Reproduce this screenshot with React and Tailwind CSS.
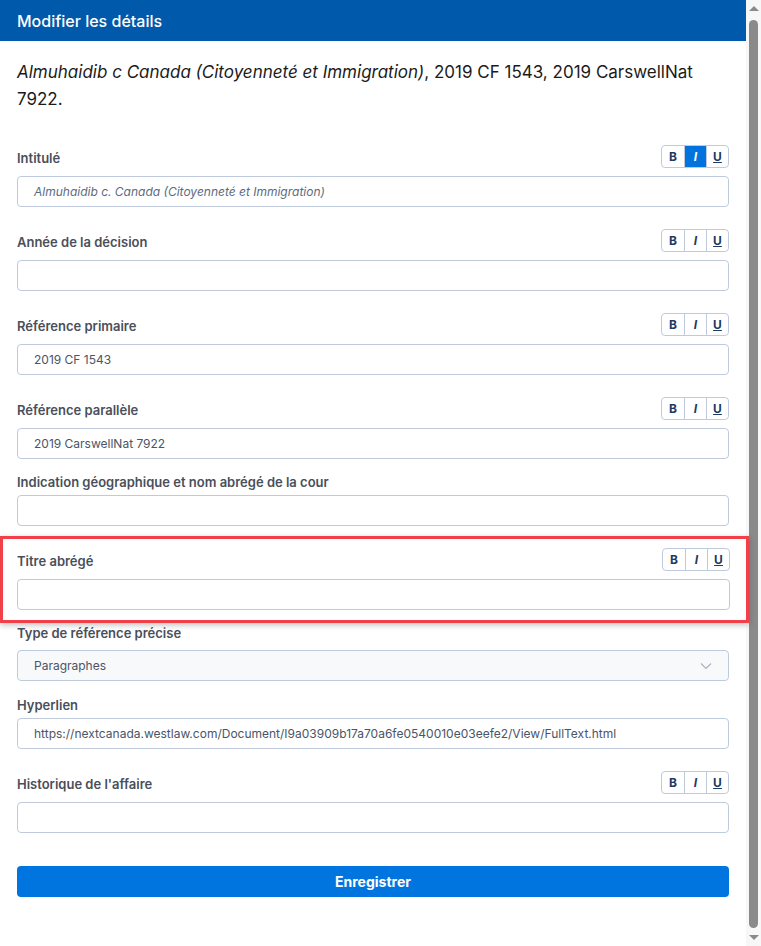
import { useState } from 'react';

const font = { fontFamily: 'Inter, Roboto, "Liberation Sans", sans-serif' };

function Toggles({ active }) {
  const btn = 'w-[22px] h-[21px] flex items-center justify-center text-[12px] text-[#1d3a63]';
  return (
    <div className="flex border border-[#bfcbdc] rounded-[4px] overflow-hidden bg-white">
      <div className={`${btn} font-bold ${active === 'b' ? 'bg-[#0073de] text-white' : ''}`}>B</div>
      <div className={`${btn} italic font-bold border-l border-[#bfcbdc] ${active === 'i' ? 'bg-[#0073de] text-white' : ''}`}>I</div>
      <div className={`${btn} underline font-bold border-l border-[#bfcbdc] ${active === 'u' ? 'bg-[#0073de] text-white' : ''}`}>U</div>
    </div>
  );
}

function Field({ label, value, toggles, active, italic }) {
  return (
    <div>
      {toggles ? (
        <div className="flex items-end justify-between h-[23px]">
          <div className="text-[13px] font-semibold text-[#4a4f5a] leading-[20px]">{label}</div>
          <Toggles active={active} />
        </div>
      ) : (
        <div className="text-[13px] font-semibold text-[#4a4f5a] leading-[20px]">{label}</div>
      )}
      <div className={`${toggles ? 'mt-[8px]' : 'mt-[3px]'} h-[31px] border border-[#bfcbdc] rounded-[4px] flex items-center px-4 text-[12px] whitespace-nowrap overflow-hidden ${italic ? 'italic text-[#5b6b82]' : 'text-[#4a5566]'}`}>
        {value}
      </div>
    </div>
  );
}

export default function App() {
  const [saved, setSaved] = useState(false);

  return (
    <div className="flex w-[761px] h-[946px] bg-white overflow-hidden" style={font}>
      <div className="w-[746px] flex flex-col">
        <div className="h-[41px] bg-[#0059aa] flex items-center px-[17px] text-white text-[16px] font-medium">
          Modifier les détails
        </div>

        <div className="px-[17px] pt-[18px] text-[17px] leading-[27px] text-[#1b1b1b]">
          <i>Almuhaidib c Canada (Citoyenneté et Immigration)</i>, 2019 CF 1543, 2019 CarswellNat 7922.
        </div>

        <div className="px-[17px] mt-[32px] flex flex-col">
          <Field label="Intitulé" value="Almuhaidib c. Canada (Citoyenneté et Immigration)" toggles active="i" italic />
          <div className="mt-[22px]">
            <Field label="Année de la décision" value="" toggles />
          </div>
          <div className="mt-[22px]">
            <Field label="Référence primaire" value="2019 CF 1543" toggles />
          </div>
          <div className="mt-[22px]">
            <Field label="Référence parallèle" value="2019 CarswellNat 7922" toggles />
          </div>
          <div className="mt-[13px]">
            <Field label="Indication géographique et nom abrégé de la cour" value="" />
          </div>
        </div>

        <div className="mt-[10px] w-[749px] border-[3px] border-[#f2404a] shadow-[0_2px_6px_rgba(0,0,0,0.25)] pl-[14px] pr-[16px] pt-[9px] pb-[10px] bg-white relative z-10">
          <Field label="Titre abrégé" value="" toggles />
        </div>

        <div className="px-[17px] flex flex-col">
          <div>
            <div className="text-[13px] font-semibold text-[#4a4f5a] leading-[20px]">Type de référence précise</div>
            <div className="mt-[7px] h-[31px] border border-[#bfcbdc] rounded-[4px] flex items-center justify-between px-4 text-[12px] text-[#4a5566] bg-[#f8f9fb]">
              <span>Paragraphes</span>
              <svg width="12" height="8" viewBox="0 0 12 8" fill="none" stroke="#a9b3c2" strokeWidth="1.2">
                <path d="M1 1.5l5 5 5-5" />
              </svg>
            </div>
          </div>
          <div className="mt-[14px]">
            <Field label="Hyperlien" value="https://nextcanada.westlaw.com/Document/I9a03909b17a70a6fe0540010e03eefe2/View/FullText.html" />
          </div>
          <div className="mt-[22px]">
            <Field label="Historique de l'affaire" value="" toggles />
          </div>
          <button
            onClick={() => setSaved(true)}
            className="mt-[33px] h-[31px] w-full rounded-[4px] bg-[#0075e0] text-white text-[14px] font-bold"
          >
            Enregistrer{saved ? '' : ''}
          </button>
        </div>
      </div>

      <div className="w-[15px] bg-[#f7f7f7] flex flex-col items-center">
        <div className="h-[17px] flex items-center justify-center">
          <div className="w-0 h-0 border-l-[5px] border-r-[5px] border-b-[5px] border-l-transparent border-r-transparent border-b-[#8a8a8a]" />
        </div>
        <div className="mt-[3px] w-[9px] h-[908px] rounded-full bg-[#8a8a8a]" />
        <div className="flex-1 flex items-center justify-center">
          <div className="w-0 h-0 border-l-[5px] border-r-[5px] border-t-[5px] border-l-transparent border-r-transparent border-t-[#8a8a8a]" />
        </div>
      </div>
    </div>
  );
}
